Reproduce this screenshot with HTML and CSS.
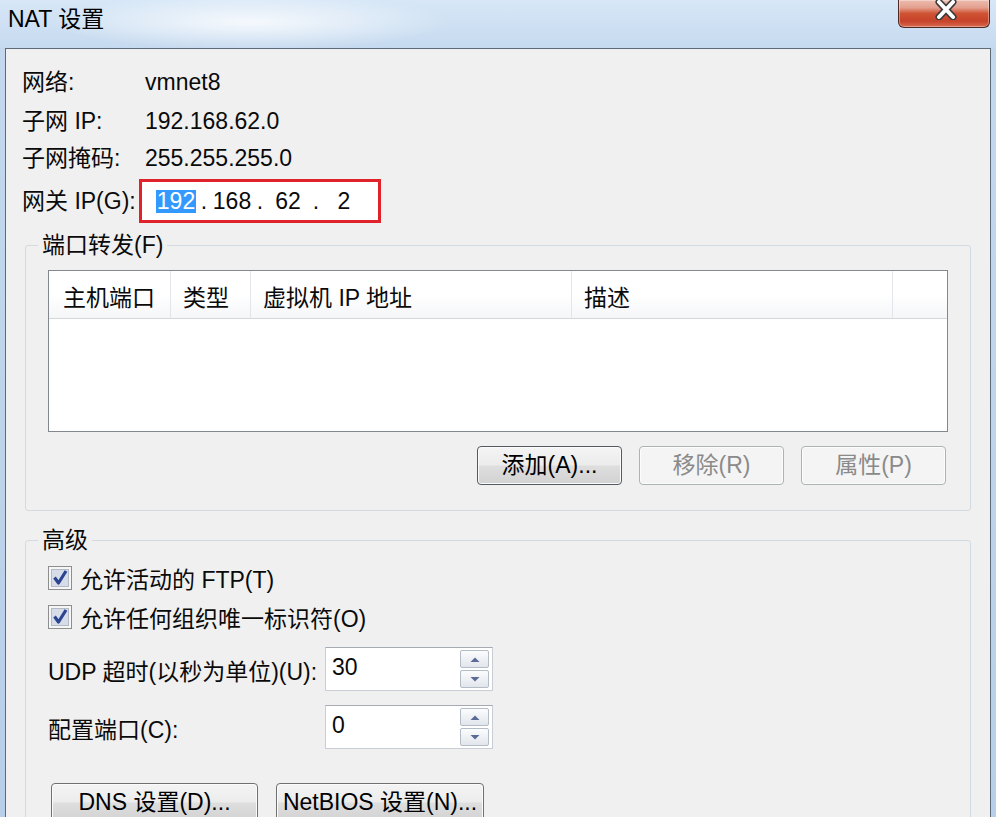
FILE: index.html
```html
<!DOCTYPE html>
<html lang="zh-CN">
<head>
<meta charset="utf-8">
<title>NAT 设置</title>
<link rel="stylesheet" href="styles.css">
</head>
<body>
<div class="window">
  <div class="titlebar">
    <span class="title">NAT 设置</span>
    <button class="close" aria-label="关闭">
      <svg width="24" height="20" viewBox="0 0 24 20">
        <path d="M5 2 L19 17 M19 2 L5 17" stroke="#3a3a3a" stroke-width="7" stroke-linecap="round" fill="none"/>
        <path d="M5 2 L19 17 M19 2 L5 17" stroke="#ffffff" stroke-width="4" stroke-linecap="round" fill="none"/>
      </svg>
    </button>
  </div>
  <div class="client">
    <div class="info">
      <span class="lbl">网络:</span><span class="val">vmnet8</span>
      <span class="lbl">子网 IP:</span><span class="val">192.168.62.0</span>
      <span class="lbl">子网掩码:</span><span class="val">255.255.255.0</span>
      <span class="lbl">网关 IP(G):</span>
      <div class="ipbox">
        <span class="oct"><span class="sel">192</span></span><span class="dot">.</span><span class="oct">168</span><span class="dot">.</span><span class="oct">62</span><span class="dot">.</span><span class="oct">2</span>
      </div>
    </div>

    <fieldset class="group pf">
      <legend>端口转发(F)</legend>
      <div class="listview">
        <div class="lv-head">
          <div class="col c1">主机端口</div>
          <div class="col c2">类型</div>
          <div class="col c3">虚拟机 IP 地址</div>
          <div class="col c4">描述</div>
          <div class="col c5"></div>
        </div>
        <div class="lv-body"></div>
      </div>
      <div class="btnrow">
        <button class="btn default">添加(A)...</button>
        <button class="btn" disabled>移除(R)</button>
        <button class="btn" disabled>属性(P)</button>
      </div>
    </fieldset>

    <fieldset class="group adv">
      <legend>高级</legend>
      <label class="chk">
        <svg class="box" width="24" height="24" viewBox="0 0 24 24">
          <rect x="0.5" y="0.5" width="23" height="23" fill="#f6f6f6" stroke="#8c8e90"/>
          <rect x="3.5" y="3.5" width="17" height="17" fill="#d6dde8" stroke="#b3bac4"/>
          <path d="M6.5 11.5 L10.5 17 L18 5" stroke="#2c4391" stroke-width="3.2" fill="none" stroke-linejoin="round"/>
        </svg>
        <span>允许活动的 FTP(T)</span>
      </label>
      <label class="chk">
        <svg class="box" width="24" height="24" viewBox="0 0 24 24">
          <rect x="0.5" y="0.5" width="23" height="23" fill="#f6f6f6" stroke="#8c8e90"/>
          <rect x="3.5" y="3.5" width="17" height="17" fill="#d6dde8" stroke="#b3bac4"/>
          <path d="M6.5 11.5 L10.5 17 L18 5" stroke="#2c4391" stroke-width="3.2" fill="none" stroke-linejoin="round"/>
        </svg>
        <span>允许任何组织唯一标识符(O)</span>
      </label>

      <div class="field udp">
        <span class="flbl">UDP 超时(以秒为单位)(U):</span>
        <div class="spin">
          <span class="num">30</span>
          <div class="ud">
            <span class="arrow"><svg width="12" height="7" viewBox="0 0 12 7"><path d="M1.5 6 L6 1.5 L10.5 6 Z" fill="#5a6c96"/></svg></span>
            <span class="arrow"><svg width="12" height="7" viewBox="0 0 12 7"><path d="M1.5 1 L6 5.5 L10.5 1 Z" fill="#5a6c96"/></svg></span>
          </div>
        </div>
      </div>
      <div class="field port">
        <span class="flbl">配置端口(C):</span>
        <div class="spin">
          <span class="num">0</span>
          <div class="ud">
            <span class="arrow"><svg width="12" height="7" viewBox="0 0 12 7"><path d="M1.5 6 L6 1.5 L10.5 6 Z" fill="#5a6c96"/></svg></span>
            <span class="arrow"><svg width="12" height="7" viewBox="0 0 12 7"><path d="M1.5 1 L6 5.5 L10.5 1 Z" fill="#5a6c96"/></svg></span>
          </div>
        </div>
      </div>

      <div class="btnrow2">
        <button class="btn dns">DNS 设置(D)...</button>
        <button class="btn nb">NetBIOS 设置(N)...</button>
      </div>
    </fieldset>
  </div>
</div>
</body>
</html>
```

FILE: styles.css
```css
* { box-sizing: border-box; }

html, body { margin: 0; padding: 0; }

body {
  width: 996px;
  height: 817px;
  overflow: hidden;
  font-family: "Liberation Sans", "Noto Sans CJK SC", sans-serif;
  font-size: 23px;
  color: #0a0a0a;
  background: linear-gradient(180deg, #c4d9ee 0, #b7cfe8 100%);
}

.window {
  display: flex;
  flex-direction: column;
  height: 817px;
}

/* ---------- title bar ---------- */
.titlebar {
  flex: none;
  height: 48px;
  display: flex;
  justify-content: space-between;
  align-items: flex-start;
  padding-left: 8px;
  background:
    radial-gradient(ellipse 200px 28px at 250px 22px, rgba(255,255,255,0.8), rgba(255,255,255,0)),
    linear-gradient(180deg, #d7e7f7 0, #c6daef 100%);
}

.title {
  font-size: 23px;
  line-height: 38px;
  color: #000;
}

.close {
  width: 92px;
  height: 28px;
  margin-right: 6px;
  padding: 0;
  border: 1px solid #4d2b24;
  border-top: none;
  border-radius: 0 0 6px 6px;
  display: flex;
  justify-content: center;
  align-items: flex-start;
  background: linear-gradient(180deg, #ecbcae 0, #e3a08f 28%, #cf5335 50%, #c7432a 78%, #d86a4f 100%);
  box-shadow: inset 0 0 0 1px rgba(255,255,255,0.35);
}

.close svg { display: block; margin-left: 4px; }

/* ---------- client area ---------- */
.client {
  flex: 1;
  margin: 0 5px;
  border: 1px solid #5d6a78;
  border-bottom: none;
  background: #f0f0f0;
}

.info {
  display: grid;
  grid-template-columns: 123px 1fr;
  grid-template-rows: 40px 37px 38px 48px;
  align-items: center;
  padding: 13px 0 0 16px;
  line-height: 26px;
}

.lbl, .val { white-space: nowrap; }

.ipbox {
  width: 242px;
  height: 44px;
  margin-left: -6px;
  border: 3px solid #e0222b;
  background: #fff;
  display: flex;
  align-items: center;
  padding-left: 12px;
}

.oct {
  width: 44px;
  text-align: center;
}

.dot {
  width: 12px;
  text-align: center;
}

.sel {
  background: #3399ff;
  color: #fff;
  padding: 0 1px;
  line-height: 23px;
  display: inline-block;
}

/* ---------- group boxes ---------- */
.group {
  margin: 0 19px;
  border: 1px solid #d2dbe2;
  border-radius: 3px;
  min-width: 0;
}

.group legend {
  padding: 0 4px;
  margin-left: -10px;
  line-height: 26px;
}

.pf {
  margin-top: 7px;
  padding: 12px 22px 25px;
}

.adv {
  margin-top: 16px;
  padding: 5px 22px 0;
}

/* ---------- list view ---------- */
.listview {
  height: 162px;
  border: 1px solid #828790;
  background: #fff;
}

.lv-head {
  display: flex;
  height: 48px;
  border-bottom: 1px solid #d5d7da;
  background: linear-gradient(180deg, #ffffff 0, #ffffff 50%, #f5f6f8 100%);
}

.col {
  border-right: 1px solid #e2e5ea;
  padding: 8px 0 0 12px;
  line-height: 38px;
  white-space: nowrap;
}

.c1 { width: 122px; padding-left: 14px; }
.c2 { width: 80px; }
.c3 { width: 321px; }
.c4 { width: 321px; }
.c5 { flex: 1; border-right: none; }

/* ---------- buttons ---------- */
.btn {
  font: inherit;
  color: #000;
  height: 39px;
  padding: 0;
  border: 1px solid #707070;
  border-radius: 4px;
  background: linear-gradient(180deg, #f4f4f4 0, #ececec 48%, #dedede 52%, #d2d2d2 100%);
  box-shadow: inset 0 0 0 1px #fbfbfb;
  line-height: 37px;
}

.btn.default {
  border-color: #555a60;
}

.btn:disabled {
  color: #8a8a8a;
  border-color: #adb2b5;
  background: #f4f4f4;
  box-shadow: inset 0 0 0 1px #fcfcfc;
}

.btnrow {
  display: flex;
  justify-content: flex-end;
  gap: 17px;
  margin-top: 14px;
  margin-right: 2px;
}

.btnrow .btn { width: 145px; }

/* ---------- advanced ---------- */
.chk {
  display: flex;
  align-items: center;
  gap: 8px;
  height: 39px;
  white-space: nowrap;
}

.chk .box { flex: none; display: block; }

.field {
  display: flex;
  align-items: center;
  height: 44px;
}

.udp { margin-top: 11px; }
.port { margin-top: 14px; }

.flbl {
  width: 277px;
  white-space: nowrap;
  padding-top: 2px;
}

.spin {
  width: 168px;
  height: 44px;
  display: flex;
  align-items: center;
  background: #fff;
  border: 1px solid #c9ced6;
  border-top-color: #a6abb3;
}

.num {
  flex: 1;
  padding-left: 6px;
  margin-top: -4px;
}

.ud {
  display: flex;
  flex-direction: column;
  gap: 2px;
  width: 29px;
  margin-right: 3px;
}

.arrow {
  height: 18px;
  display: flex;
  align-items: center;
  justify-content: center;
  border: 1px solid #b4bcc6;
  border-radius: 2px;
  background: linear-gradient(180deg, #fbfcfd 0, #eef1f5 50%, #e1e6ec 100%);
}

.arrow svg { display: block; }

.btnrow2 {
  display: flex;
  gap: 18px;
  margin-top: 34px;
  margin-left: 3px;
}

.dns { width: 207px; }
.nb { width: 208px; }
```
